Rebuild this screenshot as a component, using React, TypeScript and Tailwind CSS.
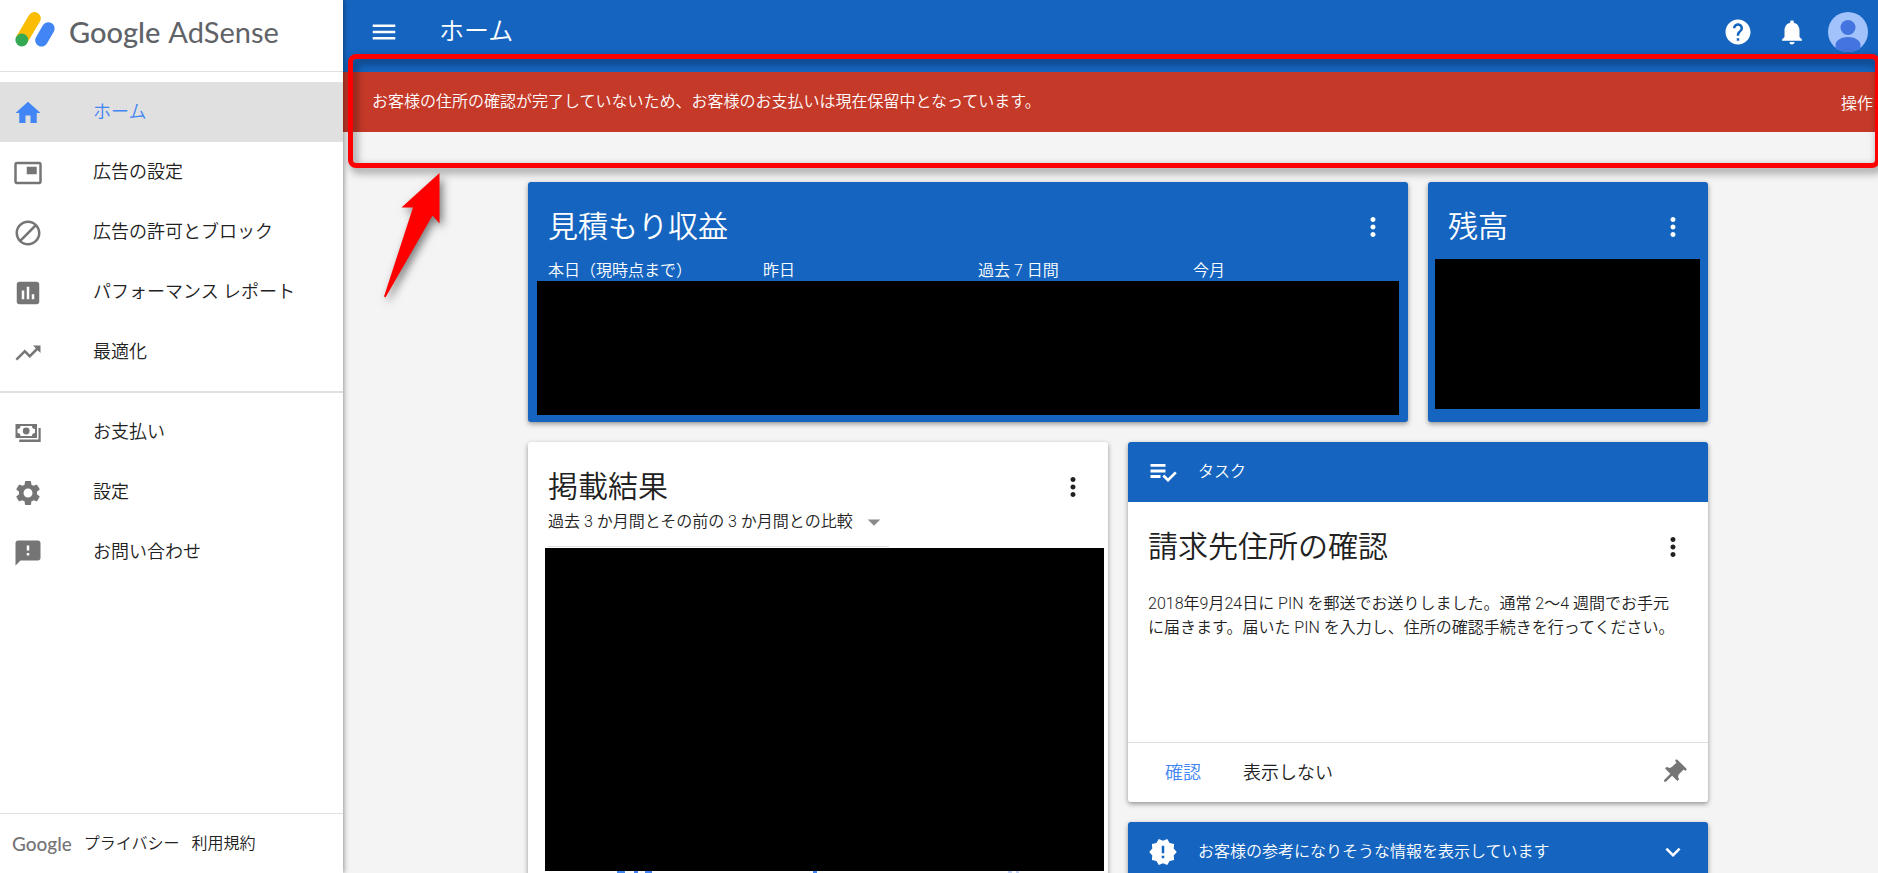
import type { ReactNode } from "react";
import type { IconType } from "react-icons";
import {
  MdArrowDropDown,
  MdAssessment,
  MdBlock,
  MdExpandMore,
  MdFeedback,
  MdHelp,
  MdHome,
  MdMenu,
  MdMoreVert,
  MdNewReleases,
  MdNotifications,
  MdPictureInPicture,
  MdPushPin,
  MdSettings,
  MdTrendingUp,
} from "react-icons/md";

function BanknotesIcon({ className }: { className?: string }) {
  return (
    <svg viewBox="0 0 30 30" className={className} fill="currentColor">
      <path
        fillRule="evenodd"
        d="M2.5 6h21.5v14h-21.5zM7.5 8a3 3 0 0 1-3 3v4a3 3 0 0 1 3 3h11.500a3 3 0 0 1 3-3v-4a3 3 0 0 1-3-3z"
      />
      <circle cx="13.200" cy="13" r="3.400" />
      <path d="M25.500 10h2.200v14H6.200v-2.500H25.500z" />
    </svg>
  );
}

function TaskListIcon({ className }: { className?: string }) {
  return (
    <svg viewBox="0 0 24 24" className={className} fill="currentColor">
      <path d="M14 10H2v2.300h12zM14 5.500H2v2.300h12zM2 16.700h8v-2.300H2zM21.500 11.500 23 13l-6.990 7-4.510-4.500L13 14l3.010 3z" />
    </svg>
  );
}

function AdSenseLogo() {
  return (
    <svg viewBox="0 0 40 36" className="h-9 w-10" fill="none" aria-hidden="true">
      <path d="M19.500 7.300 7.500 27.500" stroke="#fbbc04" strokeWidth="12.600" strokeLinecap="round" />
      <path d="M33.300 17.500 26.500 29.300" stroke="#4285f4" strokeWidth="12.600" strokeLinecap="round" />
      <circle cx="6.800" cy="29" r="6.400" fill="#34a853" />
    </svg>
  );
}

const mainItems = [
  { label: "ホーム", icon: MdHome, active: true },
  { label: "広告の設定", icon: MdPictureInPicture },
  { label: "広告の許可とブロック", icon: MdBlock },
  { label: "パフォーマンス レポート", icon: MdAssessment },
  { label: "最適化", icon: MdTrendingUp },
];

const subItems = [
  { label: "お支払い", icon: BanknotesIcon },
  { label: "設定", icon: MdSettings },
  { label: "お問い合わせ", icon: MdFeedback },
];

type NavItemProps = {
  label: string;
  icon: IconType | typeof BanknotesIcon;
  active?: boolean;
};

function NavItem({ label, icon: Icon, active }: NavItemProps) {
  return (
    <li>
      <a
        href="#"
        className={
          active
            ? "flex h-[60px] items-center gap-[50px] bg-[#e0e0e0] px-[13px] pt-0.5 text-[#4285f4]"
            : "flex h-[60px] items-center gap-[50px] px-[13px] pt-0.5 text-[#212121]"
        }
      >
        <Icon
          className={
            active ? "size-[30px] shrink-0" : "size-[30px] shrink-0 text-[#757575]"
          }
        />
        <span className="pb-0.5 text-[18px] leading-6">{label}</span>
      </a>
    </li>
  );
}

function Sidebar() {
  return (
    <aside className="relative z-10 flex w-[343px] shrink-0 flex-col bg-white shadow-[1px_0_5px_rgba(0,0,0,0.4)]">
      <a
        href="#"
        className="flex h-[72px] shrink-0 items-start gap-[14px] border-b border-[#e0e0e0] pt-[11px] pl-[15px]"
      >
        <AdSenseLogo />
        <span className="flex gap-2 pt-[5px] font-['Lato',sans-serif] text-[29px] leading-8 text-[#5f6368]">
          <span className="font-medium">Google</span>
          <span className="font-normal">AdSense</span>
        </span>
      </a>
      <nav className="flex-1">
        <ul className="border-b-2 border-[#e0e0e0] pt-[10px] pb-[9px]">
          {mainItems.map((item) => (
            <NavItem key={item.label} {...item} />
          ))}
        </ul>
        <ul className="py-[9px]">
          {subItems.map((item) => (
            <NavItem key={item.label} {...item} />
          ))}
        </ul>
      </nav>
      <footer className="flex h-[60px] shrink-0 items-center gap-3 border-t border-[#e0e0e0] pl-3 text-[16px] leading-6">
        <span className="font-['Lato',sans-serif] text-[19px] font-medium text-[#757575]">
          Google
        </span>
        <a href="#">プライバシー</a>
        <a href="#">利用規約</a>
      </footer>
    </aside>
  );
}

function Header() {
  return (
    <header className="flex h-[72px] items-center bg-[#1565c0] pr-[10px] pb-2 pl-[26px] text-white">
      <button type="button" aria-label="メニュー">
        <MdMenu className="size-[30px]" />
      </button>
      <h1 className="flex-1 pl-10 text-[25px] leading-8">ホーム</h1>
      <button type="button" aria-label="ヘルプ">
        <MdHelp className="size-[30px]" />
      </button>
      <button type="button" aria-label="通知" className="ml-6">
        <MdNotifications className="size-[30px]" />
      </button>
      <button type="button" aria-label="アカウント" className="ml-[21px]">
        <svg viewBox="0 0 40 40" className="size-10">
          <clipPath id="avatar">
            <circle cx="20" cy="20" r="20" />
          </clipPath>
          <g clipPath="url(#avatar)">
            <rect width="40" height="40" fill="#a1c2fa" />
            <circle cx="20" cy="15.500" r="7.500" fill="#4374e0" />
            <path
              d="M7.500 40v-7c0-4.500 6-8 12.500-8s12.500 3.500 12.500 8v7z"
              fill="#4374e0"
            />
          </g>
        </svg>
      </button>
    </header>
  );
}

function AlertBanner() {
  return (
    <div
      role="alert"
      className="flex h-[60px] items-center justify-between bg-[#c53929] pr-[5px] pl-[29px] text-[16px] leading-6 text-white"
    >
      <p>
        お客様の住所の確認が完了していないため、お客様のお支払いは現在保留中となっています。
      </p>
      <a href="#" className="pt-1">
        操作
      </a>
    </div>
  );
}

// Red frame and arrow laid over the page to point at the alert
function Annotation() {
  return (
    <div className="pointer-events-none absolute inset-0 z-20 overflow-hidden">
      <div className="absolute top-[54px] right-[-2px] left-[348px] h-[114px] rounded-lg border-[5px] border-[#ff0000] drop-shadow-[3px_4px_4px_rgba(0,0,0,0.5)]" />
      <svg
        viewBox="0 0 60 128"
        className="absolute top-[172px] left-[382px] h-32 w-[60px] overflow-visible drop-shadow-[3px_4px_4px_rgba(0,0,0,0.5)]"
      >
        <path
          d="M57.500 1 19.500 35.500H31L2 124.500l1.500 1L50.500 43.500l7 8z"
          fill="#ff0000"
        />
      </svg>
    </div>
  );
}

type CardHeadProps = {
  title: string;
};

function CardHead({ title }: CardHeadProps) {
  return (
    <div className="flex items-center justify-between px-5">
      <h2 className="text-[30px] leading-10">{title}</h2>
      <button type="button" aria-label={`${title}のメニュー`}>
        <MdMoreVert className="size-[30px]" />
      </button>
    </div>
  );
}

function Card({ className, children }: { className: string; children: ReactNode }) {
  return (
    <section
      className={`overflow-hidden rounded-[3px] shadow-[0_2px_5px_rgba(0,0,0,0.4)] ${className}`}
    >
      {children}
    </section>
  );
}

function EarningsCard() {
  const periods = ["本日（現時点まで）", "昨日", "過去 7 日間", "今月"];

  return (
    <Card className="flex h-60 flex-col bg-[#1565c0] pt-[25px] pb-[7px] text-white">
      <CardHead title="見積もり収益" />
      <div className="grid grid-cols-4 pt-[14px] pl-5 text-[16px] leading-5">
        {periods.map((period) => (
          <div key={period}>{period}</div>
        ))}
      </div>
      <div className="mx-[9px] flex-1 bg-black" />
    </Card>
  );
}

function BalanceCard() {
  return (
    <Card className="flex h-60 flex-col bg-[#1565c0] pt-[25px] pb-[13px] text-white">
      <CardHead title="残高" />
      <div className="mt-3 mr-2 ml-[7px] flex-1 bg-black" />
    </Card>
  );
}

function PerformanceCard() {
  return (
    <Card className="bg-white pt-[25px] pb-10 text-[#212121]">
      <CardHead title="掲載結果" />
      <div className="mx-5 mb-px flex w-[341px] items-center justify-between border-b border-[#e0e0e0] pb-[9px]">
        <select
          aria-label="比較期間"
          className="appearance-none bg-transparent text-[16px] leading-6"
        >
          <option>過去 3 か月間とその前の 3 か月間との比較</option>
        </select>
        <MdArrowDropDown className="size-[30px] text-[#8a8a8a]" />
      </div>
      <div className="mr-1 ml-[17px] h-[323px] bg-black" />
      <svg
        viewBox="0 0 580 20"
        className="h-5 w-full"
        preserveAspectRatio="xMinYMin"
        aria-hidden="true"
      >
        <path d="M89 0h8v3h-8zM106 0h4v3h-4zM117 0h7v3h-7zM285 0h4v3h-4z" fill="#4285f4" />
        <path d="M480 0h4v3h-4zM488 0h3v3h-3z" fill="#c6d4fb" />
      </svg>
    </Card>
  );
}

function TaskCard() {
  return (
    <Card className="bg-white text-[#212121]">
      <div className="flex h-[60px] items-center gap-5 bg-[#1565c0] px-5 text-[16px] leading-6 text-white">
        <TaskListIcon className="size-[30px]" />
        <span>タスク</span>
      </div>
      <div className="h-60 pt-[25px]">
        <CardHead title="請求先住所の確認" />
        <p className="pt-[25px] pr-7 pl-5 text-[16px] leading-6">
          2018年9月24日に PIN を郵送でお送りしました。通常 2～4 週間でお手元に届きます。届いた
          PIN を入力し、住所の確認手続きを行ってください。
        </p>
      </div>
      <div className="flex h-[60px] items-center gap-[42px] border-t border-[#e0e0e0] pr-5 pl-[37px] text-[18px] leading-6">
        <button type="button" className="text-[#4285f4]">
          確認
        </button>
        <button type="button">表示しない</button>
        <button type="button" aria-label="固定" className="ml-auto text-[#757575]">
          <MdPushPin className="size-[30px] rotate-45" />
        </button>
      </div>
    </Card>
  );
}

function InfoCard() {
  return (
    <Card className="bg-[#1565c0] text-white">
      <button
        type="button"
        className="flex h-[60px] w-full items-center gap-5 px-5 text-left text-[16px] leading-6"
      >
        <MdNewReleases className="size-[30px]" />
        <span className="flex-1">お客様の参考になりそうな情報を表示しています</span>
        <MdExpandMore className="size-[30px]" />
      </button>
    </Card>
  );
}

export default function App() {
  return (
    <div
      lang="ja"
      className="relative flex h-screen overflow-hidden bg-[#f4f4f4] font-['Roboto','Noto_Sans_CJK_JP',sans-serif] font-[350] text-[#212121]"
    >
      <Sidebar />
      <div className="min-w-0 flex-1">
        <Header />
        <AlertBanner />
        <main className="pt-[50px] pl-[15px]">
          <div className="mx-auto max-w-[1180px]">
            <div className="grid grid-cols-[880fr_280fr] gap-5">
              <EarningsCard />
              <BalanceCard />
            </div>
            <div className="mt-5 grid grid-cols-2 items-start gap-5">
              <PerformanceCard />
              <div className="flex flex-col gap-5">
                <TaskCard />
                <InfoCard />
              </div>
            </div>
          </div>
        </main>
      </div>
      <Annotation />
    </div>
  );
}
